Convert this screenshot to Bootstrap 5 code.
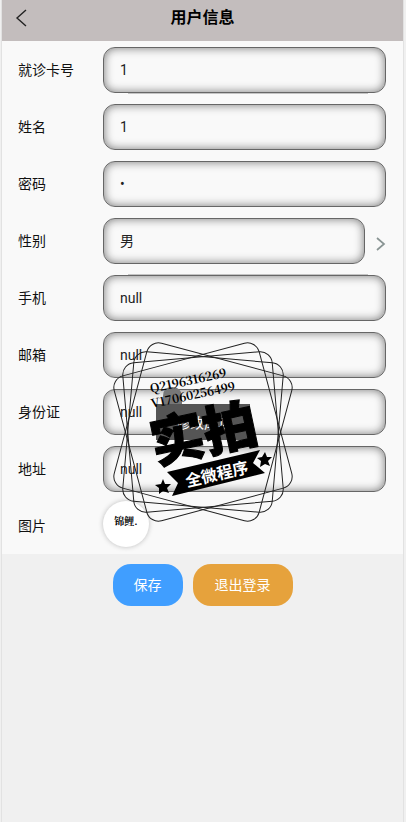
<!DOCTYPE html>
<html lang="zh-CN">
<head>
<meta charset="utf-8">
<meta name="viewport" content="width=device-width, initial-scale=1">
<title>用户信息</title>
<link href="https://cdn.jsdelivr.net/npm/bootstrap@5.3.0/dist/css/bootstrap.min.css" rel="stylesheet">
<style>
body{background:#f0f0f0;color:#111;font:14px/20px Roboto,"Noto Sans CJK SC",sans-serif}
.app{min-height:100vh;margin:0 3px 0 2px;box-shadow:0 0 0 1px #e2e2e2}
.topbar{background:#c3bdbd;height:41px;padding:0 12px}
.topbar h1{font-size:16px;font-weight:700;line-height:36px;color:#000}
.side{width:16px;height:36px}
.panel{background:#f9f9f9;padding:6px 17px 5px 16px}
.rows{gap:11px}
.line{height:46px}
.line>label,.line>.cap{width:85px;flex:none}
.field{min-width:0;height:46px;border:1px solid #666;border-radius:12px;background:#f9f9f9;box-shadow:inset 0 0 10px #777;padding:0 16px;color:#222;font-size:14px;appearance:none;flex:1}
.divided{position:relative}
.divided::before,.divided::after{content:"";position:absolute;left:110px;right:18px;border-top:1px solid #c4c4c4}
.divided::before{top:-125px}
.divided::after{bottom:-11px}
.photo{width:46px;height:46px;border-radius:50%;background:#fff;box-shadow:0 0 5px #bbb;font:700 10px/14px "Noto Serif CJK SC","Noto Sans CJK SC",serif;border:0;padding:0 0 6px;margin-bottom:4px}
.actions{padding:10px 8px;gap:10px}
.act{height:42px;border-radius:18px;color:#fff;font-size:14px;border:0}
.save{background:#409eff;padding:0 21px}
.exit{background:#e6a23c;padding:0 22px}
.overlay{left:50%;top:340px;width:186px;height:186px;transform:translateX(-50%);pointer-events:none}
</style>
<script src="https://cdn.jsdelivr.net/npm/bootstrap@5.3.0/dist/js/bootstrap.bundle.min.js"></script>
</head>
<body>
<div class="app position-relative">
<header class="topbar d-flex align-items-start justify-content-between">
<button class="side btn p-0 border-0 d-flex align-items-center" aria-label="返回"><svg width="16" height="20" viewBox="0 0 16 20" fill="none" stroke="#222" stroke-width="1.4"><path d="M12 2 3 10l9 8"/></svg></button>
<h1 class="m-0">用户信息</h1><span class="side"></span>
</header>
<main>
<form>
<div class="panel"><div class="rows d-flex flex-column">
<div class="line d-flex align-items-center"><label for="card">就诊卡号</label><input class="field" id="card" value="1"></div>
<div class="line d-flex align-items-center"><label for="name">姓名</label><input class="field" id="name" value="1"></div>
<div class="line d-flex align-items-center"><label for="pw">密码</label><input class="field" id="pw" type="password" value="1"></div>
<div class="line divided d-flex align-items-center"><label for="sex">性别</label><select class="field" id="sex"><option>男</option><option>女</option></select><svg class="ms-2 mt-1" width="13" height="16" viewBox="0 0 13 16" fill="none" stroke="#899493" stroke-width="1.7"><path d="m4 3 7 6-7 6"/></svg></div>
<div class="line d-flex align-items-center"><label for="tel">手机</label><input class="field" id="tel" value="null"></div>
<div class="line d-flex align-items-center"><label for="mail">邮箱</label><input class="field" id="mail" value="null"></div>
<div class="line d-flex align-items-center"><label for="idn">身份证</label><input class="field" id="idn" value="null"></div>
<div class="line d-flex align-items-center"><label for="addr">地址</label><input class="field" id="addr" value="null"></div>
<div class="line d-flex align-items-center"><span class="cap">图片</span><button type="button" class="photo">锦鲤.</button></div>
</div></div>
<div class="actions d-flex justify-content-center"><button type="button" class="act save btn">保存</button><button type="button" class="act exit btn">退出登录</button></div>
</form>
</main>
<svg class="overlay position-absolute" viewBox="110 340 186 186">
<path d="M163 404v-8q0-9 9-9t10 9v8z" fill="#777"/>
<path d="M156 404h94v36h-94z" fill="#555"/>
<text x="176" y="428" font-size="14" fill="#fff">修改成功</text>
<g fill="none" stroke="#222"><rect x="128" y="357" width="150" height="150" rx="12" transform="rotate(15 203 432)"/><rect x="128" y="357" width="150" height="150" rx="12" transform="rotate(5 203 432)"/><rect x="128" y="357" width="150" height="150" rx="12" transform="rotate(-5 203 432)"/><rect x="128" y="357" width="150" height="150" rx="12" transform="rotate(-15 203 432)"/></g>
<g font-family="Noto Serif CJK SC,Liberation Serif,serif" font-weight="700" font-size="12"><text transform="translate(151 393) rotate(-12)">Q2196316269</text><text transform="translate(152 408) rotate(-12)">V17060256499</text></g>
<text transform="translate(155 464) rotate(-12)" font-family="Noto Sans CJK SC,sans-serif" font-size="54" font-weight="900" stroke="#000" stroke-width="1">实拍</text>
<path d="m167 472 93-22-7 13 12 10-93 23 6-13zM163 479l2 5 6 0-4 4 2 5-6-2-4 3 0-6-4-3 6-1zM265 452l2 5 5 0-4 4 2 5-5-2-5 3 1-6-4-3 5-1z"/>
<text transform="translate(187 487) rotate(-13)" font-size="16" font-weight="700" fill="#fff">全微程序</text>
</svg>
</div>
</body>
</html>
